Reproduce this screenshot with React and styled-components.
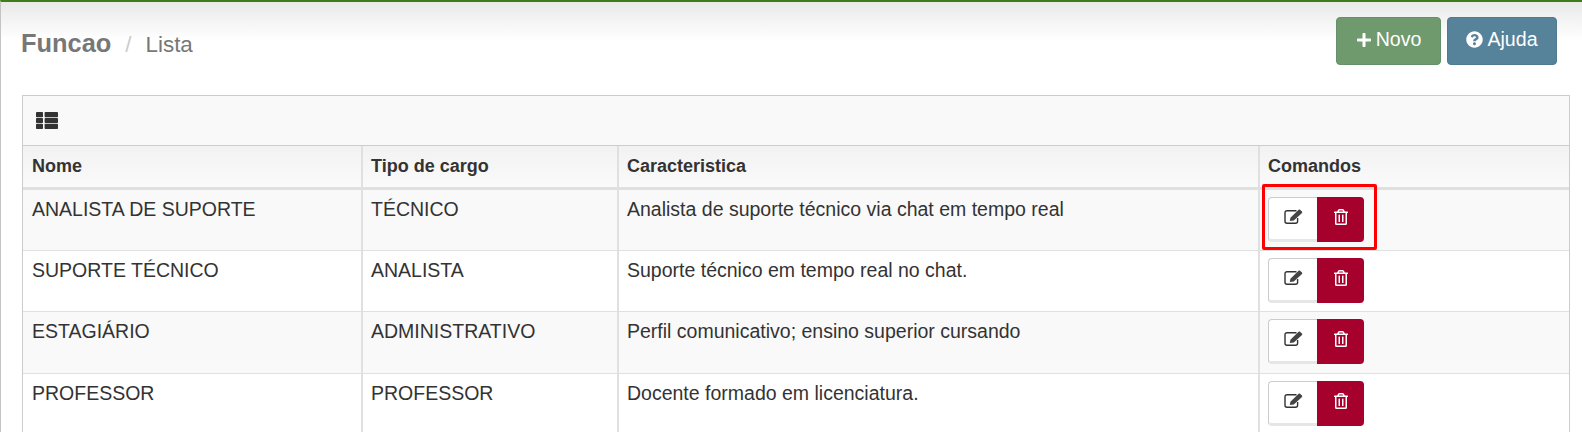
import styled, { createGlobalStyle } from 'styled-components'
import { FaPlus, FaQuestionCircle, FaRegTrashAlt } from 'react-icons/fa'

const GlobalStyle = createGlobalStyle`
  html, body {
    margin: 0;
    padding: 0;
    height: 432px;
    overflow: hidden;
    background: #fff;
    font-family: "Liberation Sans", Arial, sans-serif;
    color: #333;
  }
`

const Page = styled.div`
  height: 430px;
  border-top: 2px solid #3f7d1a;
  border-left: 1px solid #c4c4c4;
  padding: 0 12px 0 21px;
  background: linear-gradient(to bottom, #e9e9e9 0, #fff 38px);
  overflow: hidden;
`

const Header = styled.div`
  display: flex;
  justify-content: space-between;
  height: 93px;
  padding-top: 15px;
  box-sizing: border-box;
`

const Title = styled.h1`
  margin: 11px 0 0 -1px;
  font-size: 25.4px;
  line-height: 30px;
  font-weight: 700;
  color: #777;
`

const Subtitle = styled.span`
  font-size: 22.4px;
  font-weight: 400;
`

const Slash = styled.span`
  font-size: 22.4px;
  font-weight: 400;
  color: #ccc;
  margin: 0 14px;
`

const Actions = styled.div`
  display: flex;
  gap: 6px;
  margin-right: 13px;
`

const ActionButton = styled.button`
  display: flex;
  align-items: center;
  justify-content: center;
  gap: 4px;
  width: ${(p) => p.$width}px;
  height: 48px;
  padding: 0 0 3px;
  border: 1px solid ${(p) => p.$border};
  border-radius: 4px;
  background: ${(p) => p.$bg};
  color: #fff;
  font: 400 19.6px "Liberation Sans", Arial, sans-serif;
`

const Panel = styled.div`
  position: relative;
  border: 1px solid #ccc;
  border-bottom: 0;
`

const PanelHeading = styled.div`
  display: flex;
  align-items: center;
  height: 49px;
  padding-left: 13px;
  background: #f9f9f9;
  border-bottom: 1px solid #ccc;
  color: #333;
`

const Table = styled.table`
  width: 100%;
  border-collapse: collapse;
  table-layout: fixed;
  font-size: 19.5px;
`

const HeadCell = styled.th`
  height: 42px;
  box-sizing: border-box;
  padding: 0 8px;
  text-align: left;
  font-size: 18px;
  font-weight: 700;
  color: #333;
  background: linear-gradient(to bottom, #f2f2f2, #fafafa);
  border-left: 2px solid #e0e0e0;
  border-bottom: 3px solid #e0e0e0;
  width: ${(p) => p.$width}px;

  &:first-child {
    border-left: 0;
    padding-left: 9px;
  }
`

const Row = styled.tr`
  height: ${(p) => p.$height}px;
  background: ${(p) => (p.$odd ? '#f9f9f9' : '#fff')};
  border-bottom: 1px solid #e0e0e0;
`

const Cell = styled.td`
  padding: 7px 8px;
  vertical-align: top;
  line-height: 24px;
  color: #333;
  border-left: 2px solid #e0e0e0;

  &:first-child {
    border-left: 0;
    padding-left: 9px;
  }
`

const Commands = styled.div`
  display: flex;
  height: 45px;
`

const EditButton = styled.button`
  display: flex;
  align-items: center;
  justify-content: center;
  width: 49px;
  padding: 0 0 3px;
  background: #fff;
  border: 1px solid #ccc;
  border-bottom: 3px solid #e6e6e6;
  border-right: 0;
  border-radius: 4px 0 0 4px;
`

const DeleteButton = styled.button`
  width: 47px;
  padding: 0;
  background: #a6002d;
  border: 0;
  border-radius: 0 4px 4px 0;
  color: #fff;
  font-size: 16px;
`

const Highlight = styled.div`
  position: absolute;
  left: 1239px;
  top: 88px;
  width: 115px;
  height: 66px;
  box-sizing: border-box;
  border: 3px solid #f00;
  border-radius: 2px;
`

const ListIcon = () => (
  <svg width="22" height="17" viewBox="0 0 22 17" fill="#333">
    <rect x="0" y="0" width="7" height="5.2" rx="0.8" />
    <rect x="8.6" y="0" width="13.4" height="5.2" rx="0.8" />
    <rect x="0" y="5.9" width="7" height="5.2" rx="0.8" />
    <rect x="8.6" y="5.9" width="13.4" height="5.2" rx="0.8" />
    <rect x="0" y="11.8" width="7" height="5.2" rx="0.8" />
    <rect x="8.6" y="11.8" width="13.4" height="5.2" rx="0.8" />
  </svg>
)

const EditIcon = () => (
  <svg width="19" height="15" viewBox="0 0 19 15">
    <path d="M12.5 1.7H3a2 2 0 0 0-2 2v8.6a2 2 0 0 0 2 2h8.6a2 2 0 0 0 2-2V9" fill="none" stroke="#333" strokeWidth="1.4" />
    <path d="M5.8 12l.6-3.2L14.6.8c.5-.5 1-.5 1.4-.1l2 1.9c.4.4.4.9 0 1.3L9.8 11.6z" fill="#444" />
  </svg>
)

const rows = [
  { height: 62, cells: ['ANALISTA DE SUPORTE', 'TÉCNICO', 'Analista de suporte técnico via chat em tempo real'] },
  { height: 61, cells: ['SUPORTE TÉCNICO', 'ANALISTA', 'Suporte técnico em tempo real no chat.'] },
  { height: 62, cells: ['ESTAGIÁRIO', 'ADMINISTRATIVO', 'Perfil comunicativo; ensino superior cursando'] },
  { height: 62, cells: ['PROFESSOR', 'PROFESSOR', 'Docente formado em licenciatura.'] },
]

export default function App() {
  return (
    <Page>
      <GlobalStyle />
      <Header>
        <Title>
          Funcao<Slash>/</Slash><Subtitle>Lista</Subtitle>
        </Title>
        <Actions>
          <ActionButton $width={105} $bg="#6f9a6e" $border="#66906a"><FaPlus size={16} />Novo</ActionButton>
          <ActionButton $width={110} $bg="#56829a" $border="#4f7a90"><FaQuestionCircle size={17} />Ajuda</ActionButton>
        </Actions>
      </Header>
      <Panel>
        <PanelHeading><ListIcon /></PanelHeading>
        <Table>
          <thead>
            <tr>
              <HeadCell $width={339}>Nome</HeadCell>
              <HeadCell $width={256}>Tipo de cargo</HeadCell>
              <HeadCell $width={641}>Caracteristica</HeadCell>
              <HeadCell>Comandos</HeadCell>
            </tr>
          </thead>
          <tbody>
            {rows.map((row, i) => (
              <Row key={row.cells[0]} $height={row.height} $odd={i % 2 === 0}>
                <Cell>{row.cells[0]}</Cell>
                <Cell>{row.cells[1]}</Cell>
                <Cell>{row.cells[2]}</Cell>
                <Cell>
                  <Commands>
                    <EditButton><EditIcon /></EditButton>
                    <DeleteButton><FaRegTrashAlt /></DeleteButton>
                  </Commands>
                </Cell>
              </Row>
            ))}
          </tbody>
        </Table>
        <Highlight />
      </Panel>
    </Page>
  )
}
